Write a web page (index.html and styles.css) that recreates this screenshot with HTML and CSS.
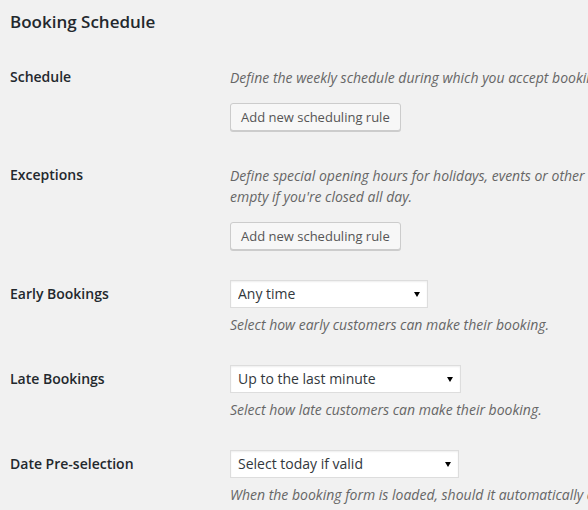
FILE: index.html
```html
<!DOCTYPE html>
<html lang="en">
<head>
<meta charset="utf-8">
<title>Booking Schedule</title>
<link rel="stylesheet" href="styles.css">
</head>
<body>
<div class="wrap">
  <h2 class="section-title">Booking Schedule</h2>
  <div class="form-table">
    <div class="row">
      <div class="th"><label>Schedule</label></div>
      <div class="td">
        <p class="description">Define the weekly schedule during which you accept bookings.</p>
        <button class="button" type="button">Add new scheduling rule</button>
      </div>
    </div>
    <div class="row">
      <div class="th"><label>Exceptions</label></div>
      <div class="td">
        <p class="description">Define special opening hours for holidays, events or other needs. Leave the time empty if you're closed all day.</p>
        <button class="button" type="button">Add new scheduling rule</button>
      </div>
    </div>
    <div class="row">
      <div class="th"><label for="early">Early Bookings</label></div>
      <div class="td">
        <span class="select-wrap w-early">
          <select id="early"><option>Any time</option></select>
        </span>
        <p class="description after-select">Select how early customers can make their booking.</p>
      </div>
    </div>
    <div class="row">
      <div class="th"><label for="late">Late Bookings</label></div>
      <div class="td">
        <span class="select-wrap w-late">
          <select id="late"><option>Up to the last minute</option></select>
        </span>
        <p class="description after-select">Select how late customers can make their booking.</p>
      </div>
    </div>
    <div class="row">
      <div class="th"><label for="pre">Date Pre-selection</label></div>
      <div class="td">
        <span class="select-wrap w-pre">
          <select id="pre"><option>Select today if valid</option></select>
        </span>
        <p class="description after-select">When the booking form is loaded, should it automatically attempt to select a valid date?</p>
      </div>
    </div>
  </div>
</div>
</body>
</html>
```

FILE: styles.css
```css
html, body {
  margin: 0;
  padding: 0;
  background: #f1f1f1;
  overflow: hidden;
}
body {
  font-family: "Open Sans", "Liberation Sans", sans-serif;
  color: #23282d;
  font-size: 14px;
}
.wrap {
  width: 750px;
  padding: 0 10px;
}
.section-title {
  margin: 11px 0 0;
  font-size: 17px;
  line-height: 22px;
  font-weight: 600;
  color: #23282d;
}
.form-table {
  margin-top: 15px;
}
.row {
  display: flex;
}
.th {
  width: 220px;
  flex: none;
  padding-top: 20px;
}
.th label {
  display: block;
  font-size: 14px;
  line-height: 18px;
  font-weight: 600;
  color: #23282d;
}
.td {
  width: 520px;
  padding: 15px 0;
}
.description {
  margin: 4px 0 0;
  font-size: 14px;
  line-height: 21px;
  font-style: italic;
  color: #666;
}
.description.after-select {
  margin-top: 6px;
}
.button {
  display: block;
  margin-top: 15px;
  height: 28px;
  padding: 0 10px 1px;
  box-sizing: border-box;
  border: 1px solid #ccc;
  border-radius: 3px;
  background: #f7f7f7;
  box-shadow: 0 1px 0 #ccc;
  color: #555;
  font-family: "Open Sans", "Liberation Sans", sans-serif;
  font-size: 13px;
  line-height: 26px;
  cursor: pointer;
}
.select-wrap {
  display: block;
  position: relative;
  height: 28px;
}
.select-wrap select {
  -webkit-appearance: none;
  appearance: none;
  display: block;
  width: 100%;
  height: 28px;
  box-sizing: border-box;
  margin: 0;
  padding: 0 20px 0 7px;
  border: 1px solid #ddd;
  border-radius: 0;
  background: #fff;
  box-shadow: inset 0 1px 2px rgba(0, 0, 0, 0.07);
  color: #32373c;
  font-family: "Open Sans", "Liberation Sans", sans-serif;
  font-size: 14px;
  line-height: 26px;
}
.select-wrap::after {
  content: "";
  position: absolute;
  right: 8px;
  top: 12px;
  width: 0;
  height: 0;
  border-left: 3.5px solid transparent;
  border-right: 3.5px solid transparent;
  border-top: 5px solid #000;
  pointer-events: none;
}
.w-early { width: 198px; }
.w-late { width: 231px; }
.w-pre { width: 229px; }
```
